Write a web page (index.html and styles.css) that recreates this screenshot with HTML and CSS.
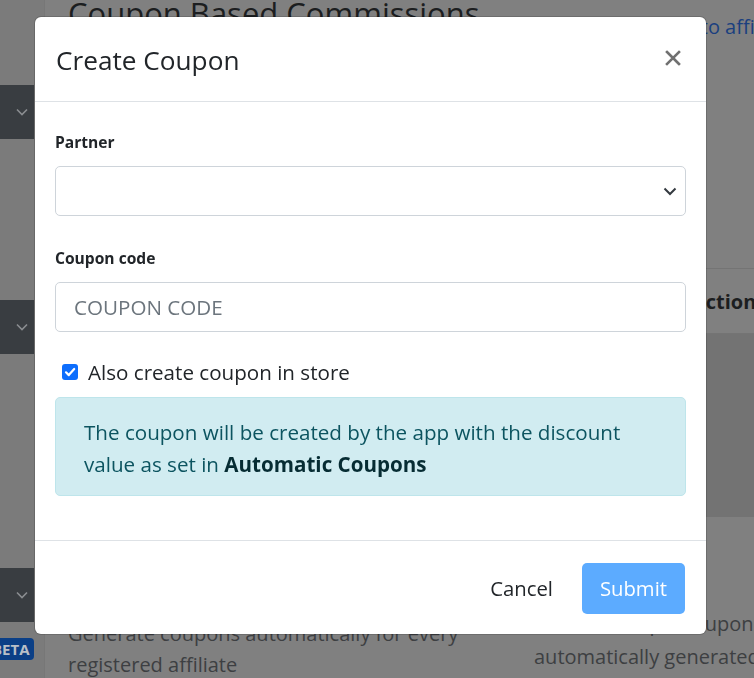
FILE: index.html
```html
<!DOCTYPE html>
<html>
<head>
<meta charset="utf-8">
<link rel="stylesheet" href="styles.css">
</head>
<body>
<div class="page">
  <aside class="sidebar">
    <div class="side-item side-item-1"><svg width="12" height="8" viewBox="0 0 12 8"><path d="M1 1.5l5 5 5-5" fill="none" stroke="#8a8d90" stroke-width="1.6"/></svg></div>
    <div class="side-item side-item-2"><svg width="12" height="8" viewBox="0 0 12 8"><path d="M1 1.5l5 5 5-5" fill="none" stroke="#8a8d90" stroke-width="1.6"/></svg></div>
    <div class="side-item side-item-3"><svg width="12" height="8" viewBox="0 0 12 8"><path d="M1 1.5l5 5 5-5" fill="none" stroke="#8a8d90" stroke-width="1.6"/></svg></div>
    <span class="beta">BETA</span>
  </aside>
  <main class="main">
    <div class="top-row">
      <h1 class="page-title">Coupon Based Commissions</h1>
      <a class="help-link">Assign coupons to affiliates</a>
    </div>
    <div class="mid-row">
      <div class="left-col"></div>
      <div class="table-card">
        <div class="table-head"><span class="th-code">Code</span><span class="th-actions">Actions</span></div>
        <div class="table-body"></div>
      </div>
    </div>
    <div class="bottom-row">
      <p class="desc left-desc">Generate coupons automatically for every registered affiliate</p>
      <p class="desc right-desc"><span class="mini-badge">Auto</span>Unique coupon<br>automatically generated for each<br>affiliate</p>
    </div>
  </main>
</div>

<div class="overlay">
  <div class="modal">
    <div class="modal-header">
      <h5 class="modal-title">Create Coupon</h5>
      <button class="close" type="button" aria-label="Close"><svg width="16" height="16" viewBox="0 0 16 16"><path d="M2 2L14 14M14 2L2 14" stroke="#707070" stroke-width="2.6" stroke-linecap="square"/></svg></button>
    </div>
    <div class="modal-body">
      <label class="field-label">Partner</label>
      <div class="select">
        <svg width="14" height="9" viewBox="0 0 14 9"><path d="M1.5 1.5l5.5 5.5 5.5-5.5" fill="none" stroke="#343a40" stroke-width="2"/></svg>
      </div>
      <label class="field-label field-label-2">Coupon code</label>
      <div class="input"><span class="placeholder">COUPON CODE</span></div>
      <div class="check-row">
        <span class="checkbox"><svg width="16" height="16" viewBox="0 0 16 16"><path d="M4 8.3l2.8 2.8L12.2 5" fill="none" stroke="#fff" stroke-width="2.2" stroke-linecap="round" stroke-linejoin="round"/></svg></span>
        <span class="check-label">Also create coupon in store</span>
      </div>
      <div class="alert">The coupon will be created by the app with the discount value as set in <b>Automatic Coupons</b></div>
    </div>
    <div class="modal-footer">
      <button class="btn btn-link" type="button">Cancel</button>
      <button class="btn btn-primary" type="button">Submit</button>
    </div>
  </div>
</div>
</body>
</html>
```
FILE: styles.css
```css
* { box-sizing: border-box; }
html, body { margin: 0; padding: 0; }
body {
  width: 754px;
  height: 678px;
  overflow: hidden;
  background: #808080;
  font-family: "Open Sans", "Noto Sans", sans-serif;
  color: #1c1e20;
}
.page {
  display: flex;
  height: 678px;
  overflow: hidden;
}
.sidebar {
  width: 45px;
  flex: none;
  background: #7b7b7b;
  border-right: 1px solid #777;
  display: flex;
  flex-direction: column;
  padding-right: 11px;
  overflow: hidden;
}
.side-item {
  flex: none;
  width: 34px;
  height: 54px;
  background: #393d41;
  display: flex;
  align-items: center;
  justify-content: flex-end;
  padding-right: 6px;
}
.side-item-1 { margin-top: 85px; }
.side-item-2 { margin-top: 161px; }
.side-item-3 { margin-top: 214px; }
.beta {
  flex: none;
  align-self: flex-start;
  margin-top: 16px;
  margin-left: -14px;
  background: #0b3f86;
  color: #b9bfc7;
  font-weight: 700;
  font-size: 15px;
  line-height: 22px;
  padding: 0 4px 0 6px;
  border-radius: 4px;
}
.main {
  flex: 1;
  padding-left: 23px;
  display: flex;
  flex-direction: column;
  min-width: 0;
}
.top-row, .mid-row, .bottom-row { flex: none; }
.top-row {
  display: flex;
  height: 236px;
}
.page-title {
  margin: -11px 0 0 0;
  font-size: 31px;
  font-weight: 500;
  line-height: 48px;
  color: #1c1e20;
  white-space: nowrap;
}
.help-link {
  margin-top: 12px;
  font-size: 20px;
  line-height: 30px;
  color: #1a3f7f;
  white-space: nowrap;
  margin-left: 71px;
}
.mid-row {
  display: flex;
  height: 281px;
}
.left-col { width: 466px; flex: none; }
.table-card {
  flex: 1;
  border-top: 1px solid #747474;
  margin-top: 32px;
}
.table-head {
  display: flex;
  height: 65px;
  align-items: center;
  font-weight: 700;
  font-size: 20px;
  border-bottom: 1px solid #747474;
  white-space: nowrap;
  padding: 0 0 0 6px;
}
.th-code { width: 152px; flex: none; }
.table-body {
  height: 183px;
  background: #737373;
}
.bottom-row {
  display: flex;
  padding-top: 98px;
}
.desc {
  margin: 0;
  font-size: 20px;
  line-height: 31px;
  color: #3d3f42;
}
.left-desc { width: 440px; flex: none; margin-top: 3px; }
.right-desc {
  margin-left: 26px;
  margin-top: -8px;
  width: 330px;
  flex: none;
  line-height: 33px;
  white-space: nowrap;
}
.mini-badge {
  display: inline-block;
  background: #7d7a66;
  color: #7d7a66;
  font-size: 16px;
  line-height: 20px;
  padding: 0 6px;
  border-radius: 3px;
  margin-right: 29px;
  vertical-align: 2px;
}

/* overlay + modal */
.overlay {
  position: fixed;
  inset: 0;
}
.modal {
  margin: 17px 0 0 35px;
  width: 671px;
  background: #fff;
  border-radius: 6px;
  box-shadow: 0 0 0 1px rgba(0,0,0,0.15);
}
.modal-header {
  height: 85px;
  border-bottom: 1px solid #dee2e6;
  display: flex;
  align-items: center;
  justify-content: space-between;
  padding: 0 25px 0 21px;
}
.modal-title {
  margin: 0;
  font-size: 26.2px;
  font-weight: 400;
  color: #212529;
  line-height: 36px;
  padding-top: 2px;
}
.close {
  border: 0;
  background: none;
  padding: 0;
  width: 16px;
  height: 16px;
  display: flex;
  margin-bottom: 2px;
}
.modal-body {
  padding: 28px 20px 44px 20px;
  display: flex;
  flex-direction: column;
}
.field-label {
  font-size: 15.6px;
  font-weight: 700;
  line-height: 24px;
  color: #212529;
}
.field-label-2 { margin-top: 30px; }
.select, .input {
  margin-top: 12px;
  height: 50px;
  border: 1px solid #ced4da;
  border-radius: 5px;
  display: flex;
  align-items: center;
}
.select {
  justify-content: flex-end;
  padding-right: 8px;
}
.input { padding-left: 18px; }
.placeholder {
  font-size: 20.6px;
  color: #6c757d;
}
.check-row {
  margin-top: 25px;
  height: 30px;
  display: flex;
  align-items: center;
  padding-left: 7px;
}
.checkbox {
  width: 16px;
  height: 16px;
  border-radius: 3px;
  background: #0d6efd;
  display: flex;
  margin-right: 10px;
}
.check-label {
  font-size: 20.6px;
  color: #212529;
}
.alert {
  margin-top: 10px;
  background: #d1ecf1;
  border: 1px solid #bee5eb;
  border-radius: 5px;
  color: #0c5460;
  font-size: 20.6px;
  line-height: 32px;
  padding: 18px 28px 15px 28px;
}
.alert b { color: #062c33; }
.modal-footer {
  border-top: 1px solid #dee2e6;
  height: 94px;
  display: flex;
  align-items: flex-start;
  justify-content: flex-end;
  padding: 22px 21px 0 20px;
}
.btn {
  font-family: inherit;
  font-size: 20.3px;
  border: 0;
  border-radius: 5px;
  height: 51px;
  line-height: 51px;
  padding: 0 18px;
}
.btn-link {
  background: none;
  color: #212529;
  margin-right: 11px;
}
.btn-primary {
  background: #5cabff;
  color: #fff;
}
```
